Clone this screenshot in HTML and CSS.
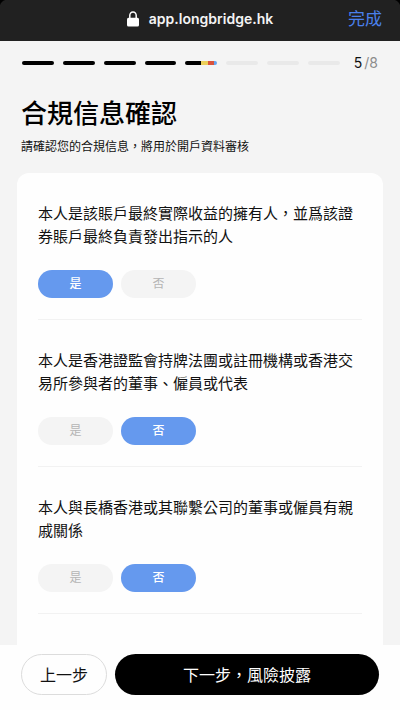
FILE: index.html
```html
<!DOCTYPE html>
<html lang="zh-Hant">
<head>
<meta charset="utf-8">
<meta name="viewport" content="width=device-width, initial-scale=1">
<title>合規信息確認</title>
<link rel="stylesheet" href="styles.css">
</head>
<body>
<header class="browser-bar">
  <div class="address">
    <svg class="lock" viewBox="0 0 12 16" aria-hidden="true">
      <path d="M2.8 7.5V4.6a3.2 3.6 0 0 1 6.4 0v2.9" fill="none" stroke="#fff" stroke-width="1.5"/>
      <rect x="0" y="6.8" width="12" height="8.8" rx="1.5" fill="#fff"/>
    </svg>
    <span>app.longbridge.hk</span>
  </div>
  <button class="done" type="button">完成</button>
</header>
<main class="page">
  <div class="progress">
    <div class="steps">
      <span class="step step-done"></span>
      <span class="step step-done"></span>
      <span class="step step-done"></span>
      <span class="step step-done"></span>
      <span class="step step-current"></span>
      <span class="step"></span>
      <span class="step"></span>
      <span class="step"></span>
    </div>
    <div class="count"><span class="count-now">5</span><span>/8</span></div>
  </div>
  <h1 class="title">合規信息確認</h1>
  <p class="subtitle">請確認您的合規信息，將用於開戶資料審核</p>
  <form class="card" id="compliance">
    <div class="question" role="radiogroup" aria-labelledby="q1">
      <p class="question-text" id="q1">本人是該賬戶最終實際收益的擁有人，並爲該證券賬戶最終負責發出指示的人</p>
      <div class="choices">
        <label class="choice"><input type="radio" name="q1" value="yes" checked><span>是</span></label>
        <label class="choice"><input type="radio" name="q1" value="no"><span>否</span></label>
      </div>
    </div>
    <div class="question" role="radiogroup" aria-labelledby="q2">
      <p class="question-text" id="q2">本人是香港證監會持牌法團或註冊機構或香港交易所參與者的董事、僱員或代表</p>
      <div class="choices">
        <label class="choice"><input type="radio" name="q2" value="yes"><span>是</span></label>
        <label class="choice"><input type="radio" name="q2" value="no" checked><span>否</span></label>
      </div>
    </div>
    <div class="question" role="radiogroup" aria-labelledby="q3">
      <p class="question-text" id="q3">本人與長橋香港或其聯繫公司的董事或僱員有親戚關係</p>
      <div class="choices">
        <label class="choice"><input type="radio" name="q3" value="yes"><span>是</span></label>
        <label class="choice"><input type="radio" name="q3" value="no" checked><span>否</span></label>
      </div>
    </div>
  </form>
</main>
<footer class="actions">
  <button class="action action-back" type="button">上一步</button>
  <button class="action action-next" type="submit" form="compliance">下一步，風險披露</button>
</footer>
</body>
</html>
```
FILE: styles.css
```css
* {
  box-sizing: border-box;
}

body {
  margin: 0;
  min-height: 100vh;
  display: flex;
  flex-direction: column;
  background: #f4f4f4;
  color: #111;
  font-family: Inter, "Noto Sans CJK TC", sans-serif;
}

button {
  margin: 0;
  padding: 0;
  border: 0;
  background: none;
  font: inherit;
  cursor: pointer;
}

.browser-bar {
  display: grid;
  grid-template-columns: 1fr auto 1fr;
  align-items: center;
  height: 41px;
  padding: 0 18px 4px;
  background:
    radial-gradient(circle at 8px 8px, #212121 8px, #000 9px) 0 0 / 8px 8px no-repeat,
    radial-gradient(circle at 0 8px, #212121 8px, #000 9px) 100% 0 / 8px 8px no-repeat,
    #212121;
}

.address {
  grid-column: 2;
  display: flex;
  align-items: center;
  gap: 10px;
  color: #f4f4f4;
  font-size: 14px;
  font-weight: 600;
  line-height: 20px;
}

.lock {
  width: 12px;
  height: 16px;
}

.done {
  justify-self: end;
  color: #4a80ec;
  font-size: 17px;
  line-height: 24px;
}

.page {
  flex: 1;
  display: flex;
  flex-direction: column;
  padding: 0 17px;
}

.progress {
  display: flex;
  align-items: center;
  gap: 14px;
  height: 43px;
  padding: 0 5px;
}

.steps {
  flex: 1;
  display: flex;
  gap: 9px;
}

.step {
  flex: 1;
  height: 4px;
  border-radius: 2px;
  background: #e9e9e9;
}

.step-done {
  background: #000;
}

.step-current {
  background: linear-gradient(to right, #000 50%, #ecd05a 50% 72%, #d9533c 72% 92%, #65a3ef 92%);
}

.count {
  display: flex;
  gap: 2px;
  color: #8c8c8c;
  font-size: 14px;
  line-height: 20px;
}

.count-now {
  color: #111;
}

.title {
  margin: 11px 4px 0;
  color: #000;
  font-size: 26px;
  font-weight: 500;
  line-height: 38px;
}

.subtitle {
  margin: 5px 4px 17px;
  font-size: 12px;
  line-height: 18px;
}

.card {
  flex: 1;
  margin: 0;
  padding: 0 21px;
  border-radius: 12px 12px 0 0;
  background: #fefefe;
}

.question {
  padding: 29px 0 21px;
  border-bottom: 1px solid #f2f2f2;
}

.question-text {
  margin: 0 0 22px;
  font-size: 15px;
  line-height: 23px;
}

.choices {
  display: flex;
  gap: 8px;
}

.choice {
  position: relative;
  width: 75px;
  height: 28px;
  cursor: pointer;
}

.choice input {
  position: absolute;
  inset: 0;
  width: 100%;
  height: 100%;
  margin: 0;
  opacity: 0;
}

.choice span {
  display: block;
  border-radius: 14px;
  background: #f4f4f4;
  color: #b4b4b4;
  font-size: 12px;
  line-height: 28px;
  text-align: center;
}

.choice input:checked + span {
  background: #6599ee;
  color: #fff;
  font-weight: 500;
}

.choice input:focus-visible + span {
  outline: 2px solid #2f6fdc;
}

.actions {
  display: flex;
  gap: 8px;
  padding: 9px 21px 15px;
  background: #fefefe;
}

.action {
  height: 41px;
  border-radius: 21px;
  font-size: 16px;
  line-height: 24px;
}

.action-back {
  padding: 0 18px;
  border: 1px solid #dcdcdc;
  color: #111;
}

.action-next {
  flex: 1;
  background: #000;
  color: #fff;
}
```
